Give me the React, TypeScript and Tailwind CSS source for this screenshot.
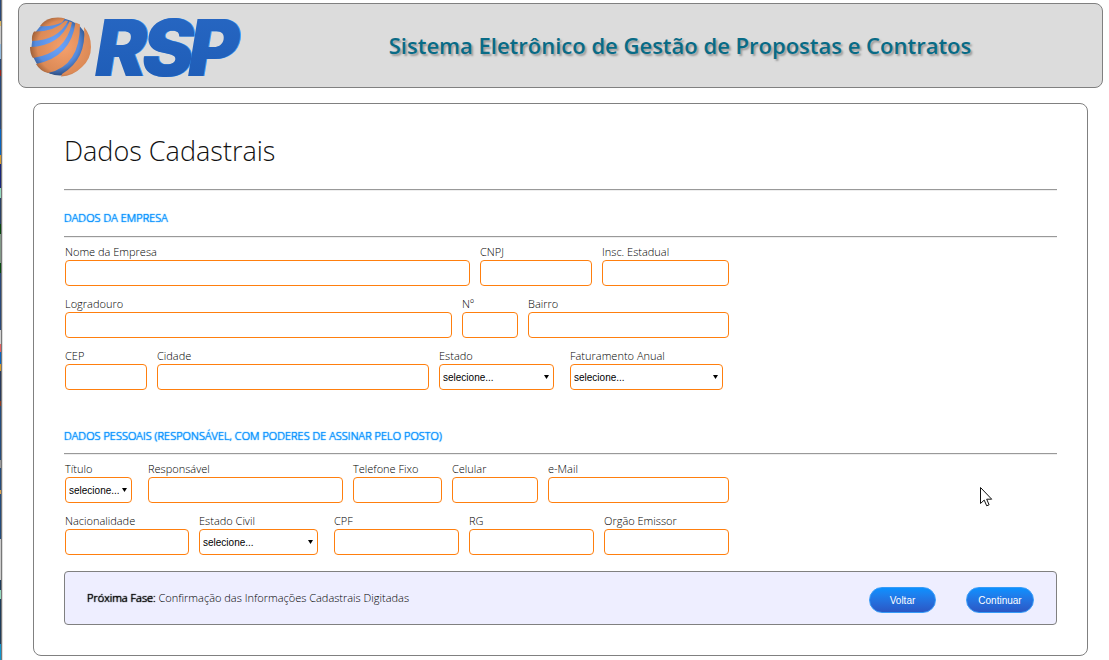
import type { ReactNode } from "react";

type FieldSpec = { id: string; label: string; width: string; select?: boolean };

const companyRows: FieldSpec[][] = [
  [
    { id: "nome", label: "Nome da Empresa", width: "w-[405px]" },
    { id: "cnpj", label: "CNPJ", width: "w-[112px]" },
    { id: "insc", label: "Insc. Estadual", width: "w-[127px]" },
  ],
  [
    { id: "logradouro", label: "Logradouro", width: "w-[387px]" },
    { id: "numero", label: "Nº", width: "w-[56px]" },
    { id: "bairro", label: "Bairro", width: "w-[201px]" },
  ],
  [
    { id: "cep", label: "CEP", width: "w-[82px]" },
    { id: "cidade", label: "Cidade", width: "w-[272px]" },
    { id: "estado", label: "Estado", width: "w-[115px]", select: true },
    { id: "faturamento", label: "Faturamento Anual", width: "w-[153px]", select: true },
  ],
];

const personRows: FieldSpec[][] = [
  [
    { id: "titulo", label: "Título", width: "w-[67px]", select: true },
    { id: "responsavel", label: "Responsável", width: "w-[195px]" },
    { id: "telefone", label: "Telefone Fixo", width: "w-[89px]" },
    { id: "celular", label: "Celular", width: "w-[86px]" },
    { id: "email", label: "e-Mail", width: "w-[181px]" },
  ],
  [
    { id: "nacionalidade", label: "Nacionalidade", width: "w-[124px]" },
    { id: "estadocivil", label: "Estado Civil", width: "w-[119px]", select: true },
    { id: "cpf", label: "CPF", width: "w-[125px]" },
    { id: "rg", label: "RG", width: "w-[125px]" },
    { id: "orgao", label: "Orgão Emissor", width: "w-[125px]" },
  ],
];

function Field({ id, label, width, select }: FieldSpec) {
  return (
    <div className={select ? "mr-1.5" : ""}>
      <label htmlFor={id} className="block h-4 text-[11px] leading-4 font-light whitespace-nowrap text-black">
        {label}
      </label>
      {select ? (
        <div className={`relative ${width}`}>
          <select
            id={id}
            className="block h-[26px] w-full appearance-none rounded border border-[#ff7f0e] bg-white pr-3 pl-[3px] font-['Liberation_Sans',Arial,sans-serif] text-[10px] text-black"
          >
            <option>selecione...</option>
          </select>
          <svg viewBox="0 0 5 4" className="pointer-events-none absolute top-[11px] right-[5px] h-1 w-[5px]" aria-hidden="true">
            <path d="M0 0h5L2.5 4z" fill="#000" />
          </svg>
        </div>
      ) : (
        <input
          id={id}
          type="text"
          className={`block h-[26px] rounded border border-[#ff7f0e] bg-white px-1 text-[11px] ${width}`}
        />
      )}
    </div>
  );
}

function Rows({ rows }: { rows: FieldSpec[][] }) {
  return (
    <div className="flex flex-col gap-2.5 pt-1.5 pl-px">
      {rows.map((row) => (
        <div key={row[0].id} className="flex flex-wrap gap-2.5">
          {row.map((field) => (
            <Field key={field.id} {...field} />
          ))}
        </div>
      ))}
    </div>
  );
}

function Rule() {
  return <hr className="h-0.5 border-t border-b border-t-[#999] border-b-[#eee]" />;
}

function SectionTitle({ children }: { children: ReactNode }) {
  return (
    <h2 className="text-[11px] leading-4 font-light text-[#0090ff] [text-shadow:0_0_1px_#0090ff,0_0_1px_#0090ff]">
      {children}
    </h2>
  );
}

function Logo() {
  return (
    <svg viewBox="0 0 220 66" className="h-[66px] w-[220px] shrink-0 overflow-visible" role="img" aria-label="RSP">
      <defs>
        <radialGradient id="ball" cx="0.45" cy="0.45" r="0.58">
          <stop offset="0" stopColor="#6fa5fb" />
          <stop offset="0.65" stopColor="#568cdf" />
          <stop offset="1" stopColor="#274472" />
        </radialGradient>
        <radialGradient id="band" gradientUnits="userSpaceOnUse" cx="38" cy="34" r="38">
          <stop offset="0" stopColor="#f5a06c" />
          <stop offset="0.7" stopColor="#dc8a56" />
          <stop offset="1" stopColor="#7c4828" />
        </radialGradient>
        <linearGradient id="letters" x1="0" y1="0" x2="0" y2="1">
          <stop offset="0" stopColor="#2868c4" />
          <stop offset="1" stopColor="#1d5bb5" />
        </linearGradient>
      </defs>
      <circle cx="34" cy="34" r="28.5" fill="url(#ball)" />
      <g fill="url(#band)">
        <path d="M14 13Q18 7 26 5Q34 4 39 5.500L36 9.500Q26 14 14 13Z" />
        <path d="M8 18.500Q28 19 39.500 7.500L42 8Q32 27 6 28Q5.500 22 8 18.500Z" />
        <path d="M4 34Q34 33 43.500 8.500L46 9.500Q40 40 7 45Q4 41 4 34Z" />
        <path d="M10 51Q45 44 49.500 9.500L54 11.500Q54 53 22 60Q14 58 10 51Z" />
        <path d="M36 61Q61 46 58 14Q65 22 65 34Q65 46 56 54Q47 63 35 63.500Z" />
      </g>
      <g fontFamily="Inter, sans-serif" fontSize="78" fontWeight="900" fontStyle="italic">
        <text x="70 117 163" y="63" fill="#38a0fb">RSP</text>
        <text x="69 116 162" y="63" fill="url(#letters)">RSP</text>
      </g>
    </svg>
  );
}

const desktopEdge =
  "bg-[linear-gradient(#294878_0_21px,#d8b45e_21px_26px,#c8c8c8_26px_44px,#91b8dc_44px_59px,#294878_59px_70px,#9a251c_70px_76px,#294878_76px_129px,#0864c0_129px_155px,#d79b30_155px_164px,#17257a_164px_188px,#91d9bd_188px_198px,#294066_198px_224px,#06460e_224px_234px,#819887_234px_263px,#064b10_263px_273px,#294878_273px_330px,#d2d2d2_330px_344px,#e46262_344px_352px,#0864c0_352px_364px,#d79b30_364px_371px,#27395c_371px_401px,#8c3a20_401px_406px,#234b7b_406px_460px,#999_460px_468px,#234b7b_468px_490px,#dba250_490px_494px,#234b7b_494px_539px,#ccc_539px_580px,#1d3c5a_580px_590px,#91d9bd_590px_599px,#1d3c5a_599px_644px,#1096ce_644px)]";

const buttonClass =
  "h-[26px] rounded-full border border-[#369bf7] bg-linear-to-b from-[#0a90ff] to-[#2a57c4] font-['Liberation_Sans',Arial,sans-serif] text-[10px] text-white";

export default function App() {
  return (
    <div className="flex min-h-screen bg-white font-['Open_Sans',sans-serif] text-[#333]">
      <div className={`w-0.5 shrink-0 border-r border-[#777] ${desktopEdge}`} />
      <div className="min-w-0 flex-1 border-l border-[#ddd] pt-[3px] pr-1.5 pb-1 pl-[15px]">
        <header className="flex h-[85px] items-center rounded-lg border border-[#808080] bg-[#dcdcdc] pl-[7px]">
          <Logo />
          <h1 className="flex-1 pl-3 text-center text-[22px] font-semibold text-[#086b86] [text-shadow:2px_2px_2px_#999]">
            Sistema Eletrônico de Gestão de Propostas e Contratos
          </h1>
        </header>

        <main className="mx-[15px] mt-[15px] rounded-lg border border-[#808080] px-[30px] pt-[27px] pb-[30px]">
          <h2 className="pb-[18px] text-[27px] leading-10 font-light text-[#111]">Dados Cadastrais</h2>
          <form onSubmit={(event) => event.preventDefault()}>
            <Rule />
            <div className="pt-[19px] pb-[10px]">
              <SectionTitle>DADOS DA EMPRESA</SectionTitle>
            </div>
            <Rule />
            <Rows rows={companyRows} />

            <div className="pt-[38px] pb-[9px]">
              <SectionTitle>DADOS PESSOAIS (RESPONSÁVEL, COM PODERES DE ASSINAR PELO POSTO)</SectionTitle>
            </div>
            <Rule />
            <Rows rows={personRows} />

            <div className="mt-4 flex h-[54px] items-center rounded border border-[#808080] bg-[#eeeeff] px-[22px]">
              <p className="flex-1 text-[11px] font-light text-black">
                <strong className="font-light [text-shadow:0_0_1px_#000,0_0_1px_#000]">Próxima Fase:</strong>{" "}
                Confirmação das Informações Cadastrais Digitadas
              </p>
              <div className="flex gap-[30px] pt-1">
                <button type="button" className={`w-[67px] ${buttonClass}`}>
                  Voltar
                </button>
                <button type="submit" className={`w-[68px] ${buttonClass}`}>
                  Continuar
                </button>
              </div>
            </div>
          </form>
        </main>
      </div>
      <svg
        viewBox="0 0 13 20"
        className="pointer-events-none absolute top-[487px] left-[980px] h-5 w-[13px]"
        aria-hidden="true"
      >
        <path d="M.5.5v16l3.7-3.4 2.5 5.7 2.4-1-2.4-5.6h5z" fill="#fff" stroke="#111" />
      </svg>
    </div>
  );
}
